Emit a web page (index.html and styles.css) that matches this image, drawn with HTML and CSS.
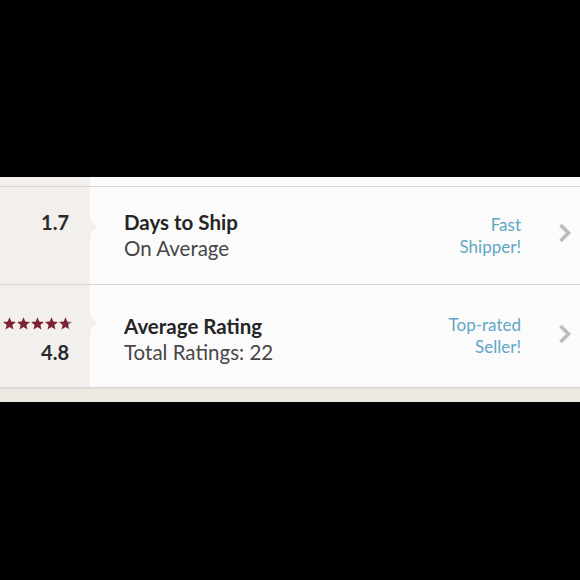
FILE: index.html
```html
<!DOCTYPE html>
<html>
<head>
<meta charset="utf-8">
<link rel="stylesheet" href="styles.css">
</head>
<body>
<div class="screen">
  <div class="list">
    <div class="row row-cut">
      <div class="side"></div>
      <div class="main"></div>
    </div>
    <div class="row row-ship">
      <div class="side">
        <div class="stat">1.7</div>
      </div>
      <div class="main">
        <div class="notch"></div>
        <div class="texts">
          <div class="title">Days to Ship</div>
          <div class="sub">On Average</div>
        </div>
        <div class="badge">Fast<br>Shipper!</div>
        <svg class="chev" width="14" height="20" viewBox="0 0 14 20"><path d="M2.5 2 L10.5 10 L2.5 18" fill="none" stroke="#bdbcbc" stroke-width="3.6"/></svg>
      </div>
    </div>
    <div class="row row-rate">
      <div class="side">
        <div class="stars">
          <svg width="70" height="13" viewBox="0 0 70 13">
            <defs>
              <path id="st" d="M6.5 0.2 L8.26 4.57 L12.97 4.9 L9.35 7.93 L10.5 12.5 L6.5 10 L2.5 12.5 L3.65 7.93 L0.03 4.9 L4.74 4.57 Z"/>
              <linearGradient id="part" x1="0" x2="1" y1="0" y2="0">
                <stop offset="0.7" stop-color="#7d2234"/>
                <stop offset="0.7" stop-color="#8c777b"/>
              </linearGradient>
            </defs>
            <use href="#st" x="0" fill="#7d2234"/>
            <use href="#st" x="14" fill="#7d2234"/>
            <use href="#st" x="28" fill="#7d2234"/>
            <use href="#st" x="42" fill="#7d2234"/>
            <use href="#st" x="56" fill="url(#part)"/>
          </svg>
        </div>
        <div class="stat">4.8</div>
      </div>
      <div class="main">
        <div class="notch"></div>
        <div class="texts">
          <div class="title">Average Rating</div>
          <div class="sub">Total Ratings: 22</div>
        </div>
        <div class="badge">Top-rated<br>Seller!</div>
        <svg class="chev" width="14" height="20" viewBox="0 0 14 20"><path d="M2.5 2 L10.5 10 L2.5 18" fill="none" stroke="#bdbcbc" stroke-width="3.6"/></svg>
      </div>
    </div>
  </div>
  <div class="footer"></div>
</div>
</body>
</html>
```
FILE: styles.css
```css
html, body {
  margin: 0;
  padding: 0;
  background: #000;
}
body {
  width: 580px;
  height: 580px;
  overflow: hidden;
  font-family: Lato, "Open Sans", sans-serif;
}
.screen {
  margin-top: 177px;
}
.list {
  display: flex;
  flex-direction: column;
}
.row {
  display: flex;
  border-bottom: 1px solid #d8d5d4;
}
.side {
  width: 90px;
  flex: none;
  background: #f3efec;
  display: flex;
  flex-direction: column;
  align-items: flex-end;
  padding-right: 21px;
  box-sizing: border-box;
}
.main {
  flex: 1;
  background: #fcfbfb;
  display: flex;
  align-items: center;
  position: relative;
  padding-left: 34px;
  padding-right: 8px;
}
.row-cut {
  height: 9px;
}
.row-ship {
  height: 97px;
}
.row-ship .side {
  padding-top: 23px;
}
.row-rate {
  height: 102px;
}
.row-rate .side {
  padding-top: 32px;
}
.notch {
  position: absolute;
  left: 0;
  top: 33px;
  width: 0;
  height: 0;
  border-top: 7px solid transparent;
  border-bottom: 7px solid transparent;
  border-left: 7px solid #f3efec;
}
.row-rate .notch {
  top: 31px;
}
.stat {
  font-size: 20px;
  font-weight: 700;
  color: #2a2a2a;
  line-height: 24px;
}
.stars {
  margin-right: -4px;
  height: 13px;
  margin-bottom: 10px;
}
.stars svg {
  display: block;
}
.texts {
  flex: 1;
  display: flex;
  flex-direction: column;
  gap: 3px;
}
.row-rate .texts {
  margin-top: 7px;
}
.title {
  font-size: 20.5px;
  font-weight: 700;
  color: #252525;
  line-height: 23px;
}
.sub {
  font-size: 20.5px;
  color: #474747;
  line-height: 23px;
}
.badge {
  text-align: right;
  font-size: 17px;
  color: #5ea7c6;
  line-height: 22px;
  margin-right: 37px;
}
.chev {
  display: block;
  flex: none;
}
.row-ship .chev {
  margin-top: -6px;
}
.row-rate .chev {
  margin-top: -5px;
}
.footer {
  height: 13px;
  background: #ece9e3;
  border-top: 1px solid #e0dcd6;
}
```
